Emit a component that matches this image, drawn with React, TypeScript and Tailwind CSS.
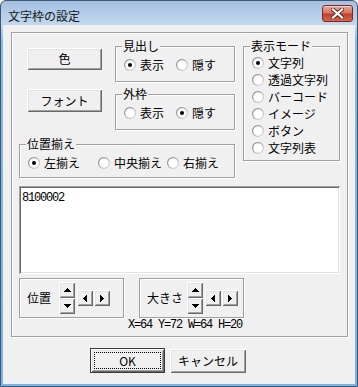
import React from "react";

// classic win32 look: raised buttons, etched group boxes, sunken edit
const raised =
  "bg-[#f0f0f0] shadow-[inset_1px_1px_0_#ffffff,inset_-1px_-1px_0_#696969,inset_2px_2px_0_#e3e3e3,inset_-2px_-2px_0_#a0a0a0]";

const Group: React.FC<{ label?: string; className?: string; children?: React.ReactNode }> = ({
  label,
  className = "",
  children,
}) => (
  <div
    className={`relative shrink-0 border border-[#a0a0a0] shadow-[inset_1px_1px_0_#ffffff,1px_1px_0_#ffffff] ${className}`}
  >
    {label && (
      <span className="absolute left-[6px] top-[-7px] bg-[#f0f0f0] px-[1px] leading-[12px]">{label}</span>
    )}
    {children}
  </div>
);

const Radio: React.FC<{ label: string; checked?: boolean; className?: string }> = ({
  label,
  checked = false,
  className = "",
}) => (
  <div className={`flex items-center shrink-0 ${className}`}>
    <svg width="12" height="12" viewBox="0 0 12 12" className="shrink-0">
      <defs>
        <linearGradient id="ring" x1="0" y1="0" x2="1" y2="1">
          <stop offset="0" stopColor="#7a7a7a" />
          <stop offset="1" stopColor="#e8e8e8" />
        </linearGradient>
      </defs>
      <circle cx="6" cy="6" r="6" fill="url(#ring)" />
      <circle cx="6" cy="6" r="4.8" fill="#ffffff" />
      {checked && <circle cx="6" cy="6" r="2" fill="#000000" />}
    </svg>
    <span className="ml-[4px] whitespace-nowrap">{label}</span>
  </div>
);

const Arrow: React.FC<{ dir: "up" | "down" | "left" | "right" }> = ({ dir }) => {
  const rows = [1, 3, 5, 7];
  if (dir === "up" || dir === "down") {
    return (
      <svg width="7" height="4" shapeRendering="crispEdges">
        {rows.map((w, i) => (
          <rect key={i} x={(7 - w) / 2} y={dir === "up" ? i : 3 - i} width={w} height="1" fill="#000" />
        ))}
      </svg>
    );
  }
  return (
    <svg width="4" height="7" shapeRendering="crispEdges">
      {rows.map((h, i) => (
        <rect key={i} y={(7 - h) / 2} x={dir === "left" ? i : 3 - i} height={h} width="1" fill="#000" />
      ))}
    </svg>
  );
};

const ArrowBtn: React.FC<{ dir: "up" | "down" | "left" | "right"; className?: string }> = ({
  dir,
  className = "",
}) => (
  <div className={`flex items-center justify-center w-[16px] h-[16px] shrink-0 ${raised} ${className}`}>
    <Arrow dir={dir} />
  </div>
);

const Spinner: React.FC<{ label: string; labelW: string }> = ({ label, labelW }) => (
  <Group className="w-[105px] h-[40px] flex items-center pl-[7px]">
    <span className={`shrink-0 leading-[12px] ${labelW}`}>{label}</span>
    <div className="flex flex-col">
      <ArrowBtn dir="up" />
      <ArrowBtn dir="down" />
    </div>
    <ArrowBtn dir="left" className="ml-[2px]" />
    <ArrowBtn dir="right" className="ml-[1px]" />
  </Group>
);

export default function App() {
  return (
    <div className="w-[358px] h-[387px] flex flex-col border border-[#3f5670] rounded-t-[6px] overflow-hidden bg-[linear-gradient(180deg,#a4c0e1_0px,#c3d8ee_24px,#86bbe8_40px,#79b4e6_100%)] text-black text-[12px] leading-[12px] font-['Noto_Sans_CJK_JP',sans-serif]">
      {/* title bar */}
      <div className="h-[24px] shrink-0 flex items-start justify-between">
        <span className="pl-[7px] pt-[9px] text-[12px] leading-[12px] text-[#101820]">文字枠の設定</span>
        <div className="mt-[4px] mr-[4px] w-[31px] h-[17px] rounded-[3px] border border-[#7a2a22] bg-[linear-gradient(180deg,#e9a89a_0%,#d47563_45%,#c2402f_55%,#d3664e_100%)] flex items-center justify-center shadow-[inset_0_1px_0_rgba(255,255,255,0.5)]">
          <svg width="13" height="11" viewBox="0 0 13 11">
            <path d="M2 1.5 L11 9.5 M11 1.5 L2 9.5" stroke="#5a2a24" strokeWidth="4" strokeLinecap="square" />
            <path d="M2 1.5 L11 9.5 M11 1.5 L2 9.5" stroke="#ffffff" strokeWidth="2.2" strokeLinecap="square" />
          </svg>
        </div>
      </div>

      {/* client area */}
      <div className="mx-[2px] mb-[2px] flex-1 bg-[#f0f0f0] flex flex-col">
        <Group className="ml-[8px] mt-[7px] w-[337px] h-[305px] pt-[13px] pl-[7px] flex flex-col">
          <div className="flex items-start">
            <div className="w-[216px] flex flex-col shrink-0">
              <div className="flex items-start">
                <div className="ml-[8px] w-[75px] flex flex-col shrink-0">
                  <div className={`mt-[2px] h-[22px] flex items-center justify-center ${raised}`}>色</div>
                  <div className={`mt-[19px] h-[23px] flex items-center justify-center ${raised}`}>フォント</div>
                </div>
                <div className="ml-[13px] w-[120px] flex flex-col shrink-0">
                  <Group label="見出し" className="h-[36px] flex items-center pt-[2px] pl-[8px]">
                    <Radio label="表示" checked className="w-[52px]" />
                    <Radio label="隠す" />
                  </Group>
                  <Group label="外枠" className="mt-[12px] h-[36px] flex items-center pt-[2px] pl-[8px]">
                    <Radio label="表示" className="w-[52px]" />
                    <Radio label="隠す" checked />
                  </Group>
                </div>
              </div>
              <Group label="位置揃え" className="mt-[14px] h-[34px] flex items-center pt-[3px] pl-[8px]">
                <Radio label="左揃え" checked className="w-[70px]" />
                <Radio label="中央揃え" className="w-[69px]" />
                <Radio label="右揃え" />
              </Group>
            </div>
            <Group label="表示モード" className="ml-[8px] w-[97px] h-[115px] pt-[7px] pl-[8px] flex flex-col">
              {["文字列", "透過文字列", "バーコード", "イメージ", "ボタン", "文字列表"].map((m, i) => (
                <Radio key={m} label={m} checked={i === 0} className="h-[17px]" />
              ))}
            </Group>
          </div>

          <div className="mt-[8px] w-[321px] h-[88px] shrink-0 bg-white shadow-[inset_1px_1px_0_#a0a0a0,inset_-1px_-1px_0_#ffffff,inset_2px_2px_0_#696969,inset_-2px_-2px_0_#e3e3e3] pl-[3px] pt-[4px]">
            <span className="font-['Liberation_Mono',monospace] text-[12px] leading-[12px] tracking-[-1.2px]">8100002</span>
          </div>

          <div className="mt-[4px] flex">
            <Spinner label="位置" labelW="w-[32px]" />
            <div className="ml-[15px]">
              <Spinner label="大きさ" labelW="w-[40px]" />
            </div>
          </div>

          <div className="ml-[109px] mt-[1px] font-['Liberation_Mono',monospace] text-[12px] leading-[12px] tracking-[-1.2px] whitespace-nowrap">
            X=64 Y=72 W=64 H=20
          </div>
        </Group>

        <div className="mt-[11px] flex items-start">
          <div className="ml-[87px] w-[75px] h-[25px] border border-[#3c3c3c] bg-[#f0f0f0] shadow-[inset_1px_1px_0_#ffffff,inset_-1px_-1px_0_#696969,inset_2px_2px_0_#e3e3e3,inset_-2px_-2px_0_#a0a0a0] p-[3px]">
            <div className="w-full h-full border border-dotted border-black flex items-center justify-center">OK</div>
          </div>
          <div className={`ml-[5px] mt-[1px] w-[76px] h-[24px] flex items-center justify-center ${raised}`}>
            キャンセル
          </div>
        </div>
      </div>
    </div>
  );
}
